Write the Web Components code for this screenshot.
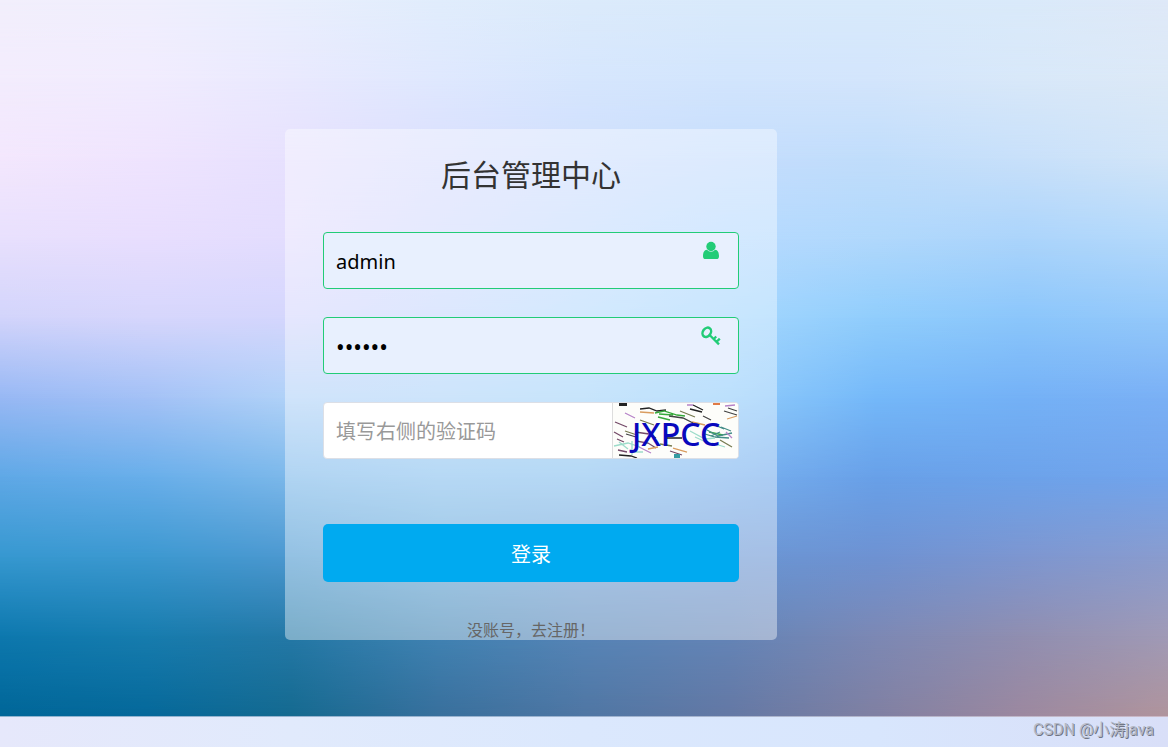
<!DOCTYPE html>
<html lang="zh-CN">
<head>
<meta charset="utf-8">
<meta name="viewport" content="width=device-width, initial-scale=1">
<title>后台管理中心</title>
<style>
  body { margin: 0; font-family: "Noto Sans", "Noto Sans CJK SC", sans-serif; color: #333; }
</style>
</head>
<body>
<login-page></login-page>
<script>
/* Soft sky backdrop: a grid of colours blended in both directions. */
class SkyBackdrop extends HTMLElement {
  static rows = [
    "f2effc f0effd e9effd e1edfc dcebfb d9eafb d8eafb daeafa dfe9f8",
    "f3ecfd f1ecfe e9e9fe dfe8fe d6e6fd d2e5fd d3e5fc d8e8f9 dce9f7",
    "f3e7fd efe4fe e7e1fe dadffe cfdffe c5ddfd c0ddfb c8e0fa d2e5f8",
    "e8e0fd e8defe e3ddfe d3dbfe c4dcfe b6daff b0d8fc abd4fb b4d9fb",
    "d2d4fb d6d6fc d4d6fd c6d8fd b5dafe a3d6fe 90cdfc 8bc6fb 94c8fa",
    "97b8f4 a3c1f6 b0d2f8 acd3f9 a2d3f9 90cbfb 74b8f9 74b1f6 7ab0f5",
    "5fa8e6 68aeea 7cb8ea 86bfee 84beee 78b0ee 68a0e8 6ca2ea 72a4ec",
    "3698d0 3c98d0 4c98d0 5fa4d6 6a9ed6 6a96d4 6e92d2 7d96d0 8a9cce",
    "0d78ae 177cae 2478a6 4082b2 5684b6 6484b6 7c88b4 908eb0 a09ab6",
    "006698 05689a 156a90 386f9c 4f76a3 6478a4 8080a2 9c889f b0949c"
  ];
  connectedCallback() {
    const root = this.attachShadow({ mode: "open" });
    const g = SkyBackdrop.rows.map(r => `linear-gradient(to right, ${r.split(" ").map(c => "#" + c).join(", ")})`);
    const bands = g.slice(0, -1).map((from, i) =>
      `<div class="band" style="background:${from}"><div class="next" style="background:${g[i + 1]}"></div></div>`).join("");
    root.innerHTML = `<style>
      :host { display: grid; grid-auto-rows: 1fr; overflow: hidden; }
      .band { display: grid; }
      .next { -webkit-mask-image: linear-gradient(transparent, #000); mask-image: linear-gradient(transparent, #000); }
    </style>${bands}`;
  }
}
customElements.define("sky-backdrop", SkyBackdrop);

class LoginField extends HTMLElement {
  connectedCallback() {
    const root = this.attachShadow({ mode: "open" });
    const type = this.getAttribute("type") || "text";
    const value = this.getAttribute("value") || "";
    const hint = this.getAttribute("placeholder") || "";
    root.innerHTML = `<style>
      :host { display: block; min-width: 0; }
      .box { display: flex; box-sizing: border-box; height: 57px; border: 1px solid #22cc77; border-radius: 4px; background: #e8f0fe; overflow: hidden; }
      :host([plain]) .box { background: #fff; border-color: #dcdfe6; }
      input { flex: 1; min-width: 0; box-sizing: border-box; padding: 2px 12px 0; border: 0; outline: 0; background: transparent; font: inherit; font-size: 20px; color: #000; }
      input[type="password"] { font-size: 23px; }
      input::placeholder { color: #999; opacity: 1; }
      ::slotted(field-icon) { margin: 8px 17px 0 0; }
    </style>
    <div class="box">
      <input type="${type}" value="${value}" placeholder="${hint}" aria-label="${this.getAttribute("label")}" autocomplete="off">
      <slot></slot>
    </div>`;
  }
}
customElements.define("login-field", LoginField);

class FieldIcon extends HTMLElement {
  connectedCallback() {
    const shapes = {
      user: `<circle cx="10" cy="5.500" r="4.700" fill="currentColor"/><path fill="currentColor" d="M6 8.800C8 11.300 12 11.300 14 8.800C17 8.800 18 12 18 15.200C18 17.200 17 18 15.500 18H4.500C3 18 2 17.200 2 15.200C2 12 3 8.800 6 8.800Z"/>`,
      key: `<ellipse cx="5.800" cy="6.300" rx="3.900" ry="5" transform="rotate(35 5.800 6.300)" fill="none" stroke="currentColor" stroke-width="2.500"/><path d="M8.600 9L18 18.400M12.500 13.200L15.200 10.500M15.400 16L18.800 12.600" fill="none" stroke="currentColor" stroke-width="2.300"/>`
    };
    this.attachShadow({ mode: "open" }).innerHTML = `<style>
      :host { display: block; flex: none; width: 20px; height: 20px; color: #22cc77; }
      svg { display: block; }
    </style><svg width="20" height="20" viewBox="0 0 20 20" aria-hidden="true">${shapes[this.getAttribute("name")]}</svg>`;
  }
}
customElements.define("field-icon", FieldIcon);

/* Verification code picture: letters over coloured noise strokes. */
class CaptchaCode extends HTMLElement {
  connectedCallback() {
    const marks = [
      ["#222", "M27 6l9-1 8 3 9-1M54 35h15M6 52l12 1 6 2M77 6l12 3M80 2l10 5"],
      ["#744a68", "M2 19l12 5M1 29l9 5M4 36l7 3M23 38l12 2 8 5M22 29l14 2 7 4M57 48l12 4M5 47l9 2"],
      ["#37aa3c", "M42 10l9-2 13 4 8 1M45 14l12 3M46 11l14 1M96 29l14 3"],
      ["#458d88", "M94 27l11 6 14-3M92 31l10 3 14 1M108 24l10 4M98 33l9-4M102 22l9 4"],
      ["#9ddcca", "M1 43l14-3 12 4M17 49h13M77 28l15 8 10-1M82 34l13 6M99 40l13 4M6 39l9 7M19 38v14"],
      ["#d99c5f", "M27 9l14 1M60 45l14 4M79 19l13 3M114 16l10-3M35 46l10-2"],
      ["#444", "M56 13l14 2 10 5M111 8l13 4M90 13l8 4M13 31l10 3M115 5l9 3"],
      ["#b783c8", "M74 2h6M112 3l10-1M26 44l12 6M12 10l10 5M113 29l6 6"],
      ["#777b50", "M27 17l14 5M67 8l15 6M107 37l12 7M47 41l12 2M12 28l12 4"]
    ].map(([c, d]) => `<path d="${d}" stroke="${c}"/>`).join("");
    this.attachShadow({ mode: "open" }).innerHTML = `<style>
      :host { display: block; width: 125px; flex: none; border-left: 1px solid #ddd; background: #fdfdfa; }
      svg { display: block; }
      text { font-family: "Noto Sans", sans-serif; font-size: 32px; font-weight: 500; fill: #0808bd; }
    </style><svg width="125" height="55" viewBox="0 0 125 55" role="img" aria-label="JXPCC">
      <g fill="none" stroke-width="1.300">${marks}</g>
      <path d="M6 0h8v3H6z" fill="#222"/><path d="M100 0h7v2h-7z" fill="#e07b46"/><path d="M61 51h6v4h-6z" fill="#369ba2"/>
      <text x="19" y="43">JXPCC</text>
    </svg>`;
  }
}
customElements.define("captcha-code", CaptchaCode);

class LoginCard extends HTMLElement {
  connectedCallback() {
    this.attachShadow({ mode: "open" }).innerHTML = `<style>
      :host { display: block; box-sizing: border-box; width: 492px; max-width: 100%; padding: 23px 38px 0; border-radius: 5px; background: rgba(255,255,255,.4); }
      h1 { margin: 0 0 34px; font-size: 30px; line-height: 46px; font-weight: 400; text-align: center; }
      form { display: grid; grid-template-columns: minmax(0, 1fr); gap: 28px; }
      button { height: 58px; margin-top: 37px; padding: 0; border: 0; border-radius: 5px; background: #00aaf0; color: #fff; font: inherit; font-size: 20px; }
      p { margin: 38px 0 0; text-align: center; line-height: 20px; font-size: 16px; }
      a { color: #666; text-decoration: none; }
    </style>
    <h1>后台管理中心</h1>
    <form>
      <login-field label="用户名" value="admin"><field-icon name="user"></field-icon></login-field>
      <login-field label="密码" type="password" value="123456"><field-icon name="key"></field-icon></login-field>
      <login-field plain label="验证码" placeholder="填写右侧的验证码"><captcha-code></captcha-code></login-field>
      <button type="button">登录</button>
    </form>
    <p><a href="#register">没账号，去注册！</a></p>`;
  }
}
customElements.define("login-card", LoginCard);

class LoginPage extends HTMLElement {
  connectedCallback() {
    this.attachShadow({ mode: "open" }).innerHTML = `<style>
      :host { display: flex; flex-direction: column; min-height: 100vh; }
      main { position: relative; flex: 1; display: flex; justify-content: center; align-items: flex-start; box-sizing: border-box; padding: 129px 106px 76px 0; }
      sky-backdrop { position: absolute; inset: 0; }
      login-card { position: relative; }
      footer { display: flex; justify-content: flex-end; align-items: center; box-sizing: border-box; height: 31px; padding: 0 14px 4px;
        background: linear-gradient(to right, #8fb4cf, #9db3d0 50%, #ccb9c6) top / 100% 1px no-repeat, linear-gradient(to right, #e6e8fb, #e1eafc 25%, #dbe8fd 50%, #d8e6fd 75%, #d9dff8);
        font-family: Roboto, "Noto Sans CJK SC", sans-serif; font-size: 16px; line-height: 24px; color: #b4b9c6; text-shadow: 1px 1px 0 #6f7585; }
    </style>
    <main><sky-backdrop></sky-backdrop><login-card></login-card></main>
    <footer><span>CSDN @小涛java</span></footer>`;
  }
}
customElements.define("login-page", LoginPage);
</script>
</body>
</html>
